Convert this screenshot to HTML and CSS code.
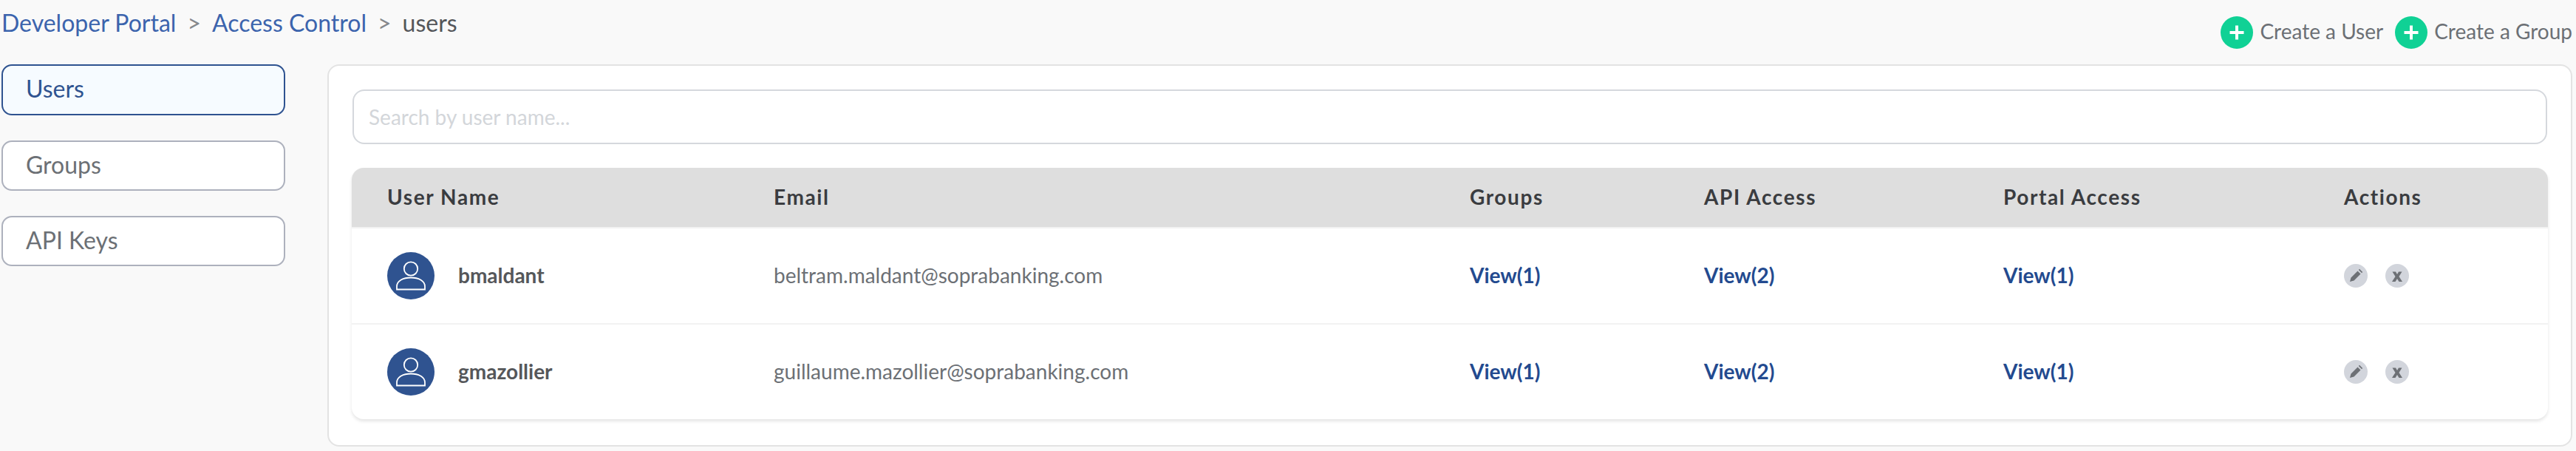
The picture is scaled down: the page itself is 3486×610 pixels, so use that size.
FILE: index.html
```html
<!DOCTYPE html>
<html lang="en">
<head>
    <meta charset="UTF-8">
    <meta name="viewport" content="width=device-width, initial-scale=1.0">
    <title>Users</title>
    <link rel="stylesheet" href="styles.css">
</head>
<body>
    <header class="topbar">
        <nav class="crumbs">
            <a href="#">Developer Portal</a>
            <span class="sep">&gt;</span>
            <a href="#">Access Control</a>
            <span class="sep">&gt;</span>
            <span class="current">users</span>
        </nav>
        <div class="create-links">
            <a class="create" href="#">
                <svg class="plus" viewBox="0 0 44 44"><circle cx="22" cy="22" r="22" fill="#10d195"/><path d="M22 12.5v19M12.5 22h19" stroke="#fff" stroke-width="4"/></svg>
                <span class="create-label">Create a User</span>
            </a>
            <a class="create" href="#">
                <svg class="plus" viewBox="0 0 44 44"><circle cx="22" cy="22" r="22" fill="#10d195"/><path d="M22 12.5v19M12.5 22h19" stroke="#fff" stroke-width="4"/></svg>
                <span class="create-label">Create a Group</span>
            </a>
        </div>
    </header>

    <div class="layout">
        <aside class="side">
            <a class="side-btn active" href="#">Users</a>
            <a class="side-btn" href="#">Groups</a>
            <a class="side-btn" href="#">API Keys</a>
        </aside>

        <main class="panel">
            <input class="search" type="search" placeholder="Search by user name...">

            <div class="table">
                <div class="row head">
                    <div>User Name</div>
                    <div>Email</div>
                    <div>Groups</div>
                    <div>API Access</div>
                    <div>Portal Access</div>
                    <div>Actions</div>
                </div>

                <div class="row">
                    <div class="user">
                        <svg class="avatar" viewBox="0 0 64 64"><circle cx="32" cy="32" r="32" fill="#2f5390"/><circle cx="32" cy="22.500" r="9.200" fill="none" stroke="#fff" stroke-width="1.800"/><path d="M13 50.500v-4c0-8 9-12 19-12s19 4 19 12v4z" fill="none" stroke="#fff" stroke-width="1.800"/></svg>
                        <span class="name">bmaldant</span>
                    </div>
                    <div class="email">beltram.maldant@soprabanking.com</div>
                    <div><a class="view" href="#">View(1)</a></div>
                    <div><a class="view" href="#">View(2)</a></div>
                    <div><a class="view" href="#">View(1)</a></div>
                    <div class="actions">
                        <svg class="act" viewBox="0 0 32 32"><circle cx="16" cy="16" r="16" fill="#d2d5dc"/><path d="M8 24l1.500-5.500 9-9 4 4-9 9zM19.800 8l1.200-1.200 4.200 4.200-1.200 1.200z" fill="#6d7075"/></svg>
                        <svg class="act" viewBox="0 0 32 32"><circle cx="16" cy="16" r="16" fill="#d2d5dc"/><path d="M9.500 10.500h4.500l2 3.500 2-3.500h4.500l-4 6.500 4.500 7h-4.500l-2.500-4-2.500 4h-4.500l4.500-7z" fill="#6d7075"/></svg>
                    </div>
                </div>

                <div class="row">
                    <div class="user">
                        <svg class="avatar" viewBox="0 0 64 64"><circle cx="32" cy="32" r="32" fill="#2f5390"/><circle cx="32" cy="22.500" r="9.200" fill="none" stroke="#fff" stroke-width="1.800"/><path d="M13 50.500v-4c0-8 9-12 19-12s19 4 19 12v4z" fill="none" stroke="#fff" stroke-width="1.800"/></svg>
                        <span class="name">gmazollier</span>
                    </div>
                    <div class="email">guillaume.mazollier@soprabanking.com</div>
                    <div><a class="view" href="#">View(1)</a></div>
                    <div><a class="view" href="#">View(2)</a></div>
                    <div><a class="view" href="#">View(1)</a></div>
                    <div class="actions">
                        <svg class="act" viewBox="0 0 32 32"><circle cx="16" cy="16" r="16" fill="#d2d5dc"/><path d="M8 24l1.500-5.500 9-9 4 4-9 9zM19.800 8l1.200-1.200 4.200 4.200-1.200 1.200z" fill="#6d7075"/></svg>
                        <svg class="act" viewBox="0 0 32 32"><circle cx="16" cy="16" r="16" fill="#d2d5dc"/><path d="M9.500 10.500h4.500l2 3.500 2-3.500h4.500l-4 6.500 4.500 7h-4.500l-2.500-4-2.500 4h-4.500l4.500-7z" fill="#6d7075"/></svg>
                    </div>
                </div>
            </div>
        </main>
    </div>
</body>
</html>
```

FILE: styles.css
```css
* { box-sizing: border-box; }
body { margin: 0; height: 610px; overflow: hidden; background: #f9f9f9; font-family: Lato, "Open Sans", sans-serif; color: #6c7075; }
a { text-decoration: none; }

.topbar { display: flex; justify-content: space-between; height: 87px; padding-left: 2px; padding-right: 5px; }
.crumbs { display: flex; gap: 15px; height: 60px; align-items: center; font-size: 32px; }
.crumbs a { color: #3c64ad; }
.crumbs .sep { color: #85888c; }
.crumbs .current { color: #54565a; }
.create-links { display: flex; gap: 16px; padding-top: 22px; }
.create { display: flex; align-items: center; gap: 9px; height: 44px; font-size: 28px; color: #6c7075; }
.create-label { padding-bottom: 4px; }
.plus { width: 44px; height: 44px; }

.layout { display: flex; padding-left: 2px; padding-right: 5px; }
.side { width: 384px; display: flex; flex-direction: column; gap: 34px; }
.side-btn { display: flex; align-items: center; height: 68px; padding-left: 31px; padding-bottom: 4px; font-size: 32px; color: #6c7075; background: #fff; border: 2px solid #adb1bd; border-radius: 14px; }
.side-btn.active { height: 69px; color: #2f5390; background: #f6fbff; border-color: #2f5390; }

.panel { flex: 1; margin-left: 57px; height: 517px; padding: 32px 32px 0; background: #fff; border: 2px solid #e3e3e3; border-radius: 16px; }
.search { display: block; width: 100%; height: 74px; padding: 0 20px; font-family: inherit; font-size: 28px; background: #fff; border: 2px solid #d5d8dd; border-radius: 16px; outline: none; }
.search::placeholder { color: #d3d6da; }

.table { margin: 32px -1px 0; border-radius: 16px; background: #fff; box-shadow: 0 3px 4px #e6e6e6; }
.row { display: grid; grid-template-columns: 523px 942px 317px 405px 461px 1fr; align-items: center; height: 130px; padding-left: 48px; border-bottom: 2px solid #f2f2f2; font-size: 28px; }
.row > div { padding-bottom: 2px; }
.row > .user, .row > .actions { padding-bottom: 0; }
.row:last-child { height: 128px; border-bottom: none; border-radius: 0 0 16px 16px; }
.row.head { height: 82px; font-weight: 700; letter-spacing: 1.6px; color: #3a3c40; background: #dedede; border-radius: 16px 16px 0 0; }
.user { display: flex; align-items: center; gap: 32px; }
.avatar { width: 64px; height: 64px; }
.name { padding-bottom: 2px; font-weight: 700; color: #55575a; }
.view { font-weight: 700; color: #234a8f; }
.actions { display: flex; gap: 24px; }
.act { width: 32px; height: 32px; }
```
